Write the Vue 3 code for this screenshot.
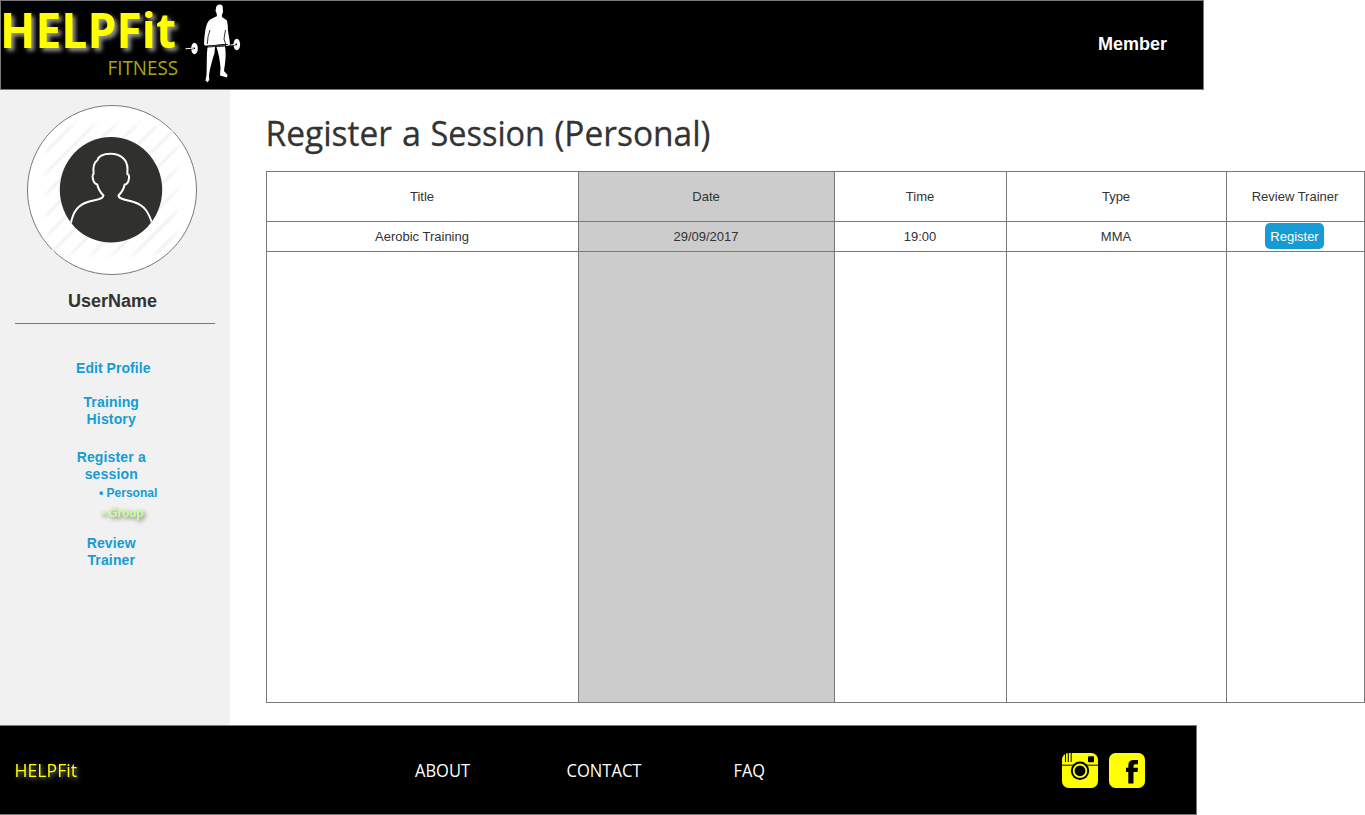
<script setup>
const columns = [
  { title: 'Title', value: 'Aerobic Training' },
  { title: 'Date', value: '29/09/2017', sorted: true },
  { title: 'Time', value: '19:00' },
  { title: 'Type', value: 'MMA' },
  { title: 'Review Trainer', action: 'Register' },
]
const headingWords = [
  { text: 'Register', x: -0.5, width: 126.5 },
  { text: 'a', x: 136, width: 19 },
  { text: 'Session', x: 164.5, width: 114.5 },
  { text: '(Personal)', x: 288.5, width: 156 },
]
</script>

<template>
  <div class="page">
    <header class="header">
      <svg class="logo" width="250" height="88" viewBox="1 1 250 88">
        <text class="brand" x="0" y="48" textLength="176" lengthAdjust="spacingAndGlyphs">HELPFit</text>
        <text class="tagline" x="107.500" y="75" textLength="70.500" lengthAdjust="spacingAndGlyphs">FITNESS</text>
        <g fill="#fff">
          <path d="M216.200 7C217 4 221.500 3.600 222.700 6.500L223 12L221.800 15.200L222 17L227 20.500L227.800 26C227.500 31 229.500 38 230 44L229.500 45.500L226.500 46L224.500 44L206 46L204 44.500C204.500 36 205 27 208 22C210 18.500 215 17.500 217 16L216.500 13L215.500 11Z" />
          <path d="M207.500 47.500L215 47L214.500 53C212 61 210 68 209 75L209.200 80L207.500 82.200L205.500 80.500L206.500 75C207 65 206.500 55 207.500 47.500Z" />
          <path d="M216.500 47L225 46.500C226.500 55 225 64 224 71L227.500 75L227 77.500L220 75.500L220.500 68C220 60 218.500 53 216.500 47Z" />
          <ellipse cx="194.500" cy="48.500" rx="3.300" ry="5.700" />
          <ellipse cx="236.800" cy="44.500" rx="3.300" ry="5.700" />
        </g>
        <g fill="none" stroke="#000" stroke-width=".8">
          <path d="M210 30Q207.500 36 207.300 44M225.500 30L224 39L226 45M206 46L228 44.500" />
          <path d="M190.500 48.800L195 48.300M233 45L237 44.300" stroke-width="1.500" />
        </g>
        <path d="M185.500 48.800L194 48M230.500 45L235.500 44.300" stroke="#fff" />
        <path d="M208 46.500L225 45.500" stroke="#aaa" stroke-width=".5" />
      </svg>
      <span class="role">Member</span>
    </header>

    <div class="body">
      <aside class="sidebar">
        <svg class="avatar" width="170" height="170" viewBox="27 105 170 170">
          <defs>
            <pattern id="stripes" width="15" height="15" patternUnits="userSpaceOnUse" patternTransform="rotate(45)">
              <rect x="3" width="3.500" height="15" fill="#f4f4f4" />
            </pattern>
            <filter id="soft" x="-20%" y="-20%" width="140%" height="140%"><feGaussianBlur stdDeviation="3" /></filter>
            <mask id="fade"><rect x="46" y="125" width="131" height="130" rx="18" fill="#fff" filter="url(#soft)" /></mask>
            <clipPath id="disc"><ellipse cx="111" cy="189.800" rx="51.200" ry="52.800" /></clipPath>
          </defs>
          <circle cx="112" cy="190" r="84.500" fill="#fff" stroke="#797979" />
          <rect x="40" y="118" width="145" height="145" fill="url(#stripes)" mask="url(#fade)" />
          <ellipse cx="111" cy="189.800" rx="51.200" ry="52.800" fill="#30302e" />
          <path clip-path="url(#disc)" fill="none" stroke="#fff" stroke-width="2" stroke-linejoin="round" d="M70.500 225C73 210 79 205 87 202.200C94 199.500 103 200 103.500 195.500C100 192 98 188 97.300 184.500C93 183.500 91.500 175.500 93.600 174C92.800 168 93.500 163 97.500 160C99 155.500 104 153.800 110.500 153.800C121 153.800 127.500 160 127.500 169L127.300 174C130.500 175 129 184 124.700 184.500C124 188 122 192 118.500 195.500C118.500 199.500 128 200 135 202.500C144 205.500 149 212 152.500 225" />
        </svg>
        <h2 class="user">UserName</h2>
        <nav class="menu">
          <a class="edit">Edit Profile</a>
          <a class="history">Training<br />History</a>
          <a class="session">Register a<br />session</a>
          <a class="sub personal">• Personal</a>
          <a class="sub group">• Group</a>
          <a class="review">Review<br />Trainer</a>
        </nav>
      </aside>

      <main class="content">
        <svg class="heading" width="460" height="60" viewBox="0 0 460 60">
          <text v-for="w in headingWords" :key="w.text" :x="w.x" y="41" :textLength="w.width" lengthAdjust="spacingAndGlyphs">{{ w.text }}</text>
        </svg>
        <section class="table">
          <div v-for="c in columns" :key="c.title" class="column" :class="{ sorted: c.sorted }">
            <div class="cell head">{{ c.title }}</div>
            <div class="cell value">
              <button v-if="c.action" class="register">{{ c.action }}</button>
              <template v-else>{{ c.value }}</template>
            </div>
          </div>
        </section>
      </main>
    </div>

    <footer class="footer">
      <svg class="links" width="800" height="88" viewBox="0 726 800 88">
        <text class="mark" x="14.500" y="777" textLength="62.500" lengthAdjust="spacingAndGlyphs">HELPFit</text>
        <text x="415" y="777" textLength="55" lengthAdjust="spacingAndGlyphs">ABOUT</text>
        <text x="566.500" y="777" textLength="75" lengthAdjust="spacingAndGlyphs">CONTACT</text>
        <text x="733.500" y="777" textLength="31.500" lengthAdjust="spacingAndGlyphs">FAQ</text>
      </svg>
      <div class="social">
        <svg width="36" height="35" viewBox="0 0 36 35">
          <rect width="36" height="35" rx="6.500" fill="#ff0" />
          <path d="M3.500 0V9M6.300 0V9M9.200 0V9M0 12.200H36" stroke="#000" stroke-width="1" />
          <rect x="26" y="3.200" width="6" height="6" rx="1" />
          <circle cx="18" cy="17.800" r="9.200" />
          <circle cx="18" cy="17.800" r="6.300" fill="none" stroke="#ff0" stroke-width="1.800" />
        </svg>
        <svg width="36" height="35" viewBox="0 0 36 35">
          <rect width="36" height="35" rx="6.500" fill="#ff0" />
          <path d="M19.300 30.500V19H17V14.800H19.300V12.500Q19.300 7 24.500 7H29V11.200H26.300Q24.500 11.200 24.500 12.800V14.800H29L28.500 19H24.500V30.500Z" />
        </svg>
      </div>
    </footer>
  </div>
</template>

<style>
body { margin: 0; background: #fff; overflow: hidden; }
</style>

<style scoped>
.page { width: 1365px; height: 815px; display: flex; flex-direction: column; font-family: "Liberation Sans", Arial, sans-serif; font-size: 13px; color: #333; }
.header { box-sizing: border-box; width: 1204px; height: 90px; border: 1px solid #797979; background: #000; display: flex; justify-content: space-between; }
svg { display: block; flex: none; }
svg text { font-family: "Trebuchet MS", "Open Sans", sans-serif; }
.logo { overflow: visible; }
.brand { font-size: 48px; font-weight: 700; fill: #ff0; filter: drop-shadow(3px 3px 2px rgba(255, 255, 255, .6)); }
.tagline { font-size: 20px; fill: #aaaa00; }
.role { margin: 33px 36px 0 0; font-size: 18px; line-height: 21px; font-weight: 700; color: #fff; }
.body { display: flex; height: 635px; }
.sidebar { width: 230px; background: #f1f1f1; display: flex; flex-direction: column; align-items: flex-start; }
.avatar { margin: 15px 0 0 27px; }
.user { box-sizing: border-box; width: 200px; height: 49px; margin: 0 0 0 15px; padding: 15px 5px 0 0; border-bottom: 1px solid #797979; text-align: center; font-size: 18px; line-height: 22px; color: #333; }
.menu { width: 222.5px; display: flex; flex-direction: column; text-align: center; font-size: 14px; line-height: 17px; font-weight: 700; color: #169bd5; letter-spacing: .15px; }
.edit { margin: 36px 0 0 4px; letter-spacing: .05px; }
.history { margin-top: 17px; }
.session { margin-top: 21px; }
.sub { font-size: 12px; line-height: 14px; text-align: left; letter-spacing: 0; }
.personal { margin: 3px 0 0 99px; }
.group { margin: 6px 0 0 101px; color: #caff99; letter-spacing: -.15px; text-shadow: 2px 2px 4px rgba(0, 0, 0, .55); }
.review { margin-top: 15px; }
.content { padding: 15px 0 0 36px; }
.heading { overflow: visible; font-size: 34px; fill: #333; stroke: #333; stroke-width: .3px; }
.table { box-sizing: border-box; width: 1099px; height: 532px; margin-top: 6px; border: 1px solid #797979; display: grid; grid-template-columns: 312px 256px 172px 220px 137px; }
.column { box-sizing: border-box; border-right: 1px solid #797979; }
.column:last-child { border-right: 0; }
.sorted { background: #ccc; }
.cell { box-sizing: border-box; border-bottom: 1px solid #797979; padding-right: 1px; display: flex; align-items: center; justify-content: center; }
.head { height: 50px; }
.value { height: 30px; }
.register { width: 59px; height: 26px; margin: 0 1px 2px 0; padding: 0; border: 0; border-radius: 5px; background: #169bd5; color: #fff; font: inherit; line-height: 28px; }
.footer { box-sizing: border-box; width: 1197px; height: 90px; border: 1px solid #797979; border-left: 0; background: #000; display: flex; justify-content: space-between; }
.links { font-size: 18px; fill: #fff; }
.mark { fill: #ff0; filter: drop-shadow(2px 2px 2px rgba(255, 255, 255, .5)); }
.social { display: flex; gap: 11px; margin: 27px 51px 0 0; }
</style>
